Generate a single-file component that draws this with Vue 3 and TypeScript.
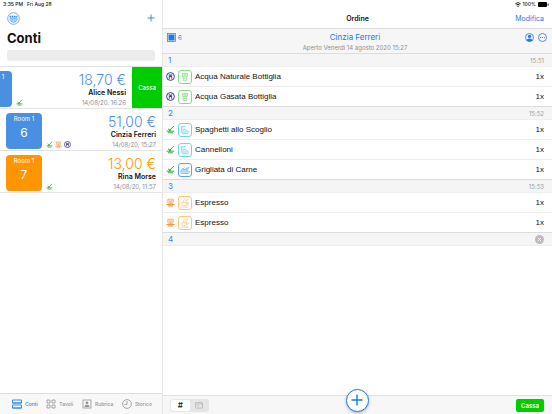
<script setup lang="ts">
import { ref } from 'vue'

type Mark = 'dish' | 'cup' | 'bottle'
type Picture = 'glass' | 'pasta' | 'grill' | 'coffee'

interface Account {
  room: string
  table: string
  total: string
  name: string
  date: string
  tone: 'blue' | 'orange'
  marks: Mark[]
  swiped: boolean
}

interface Course {
  number: number
  time: string
  items: { name: string; mark: Mark; picture: Picture; quantity: number }[]
}

const accounts: Account[] = [
  { room: 'Room 1', table: '', total: '18,70 €', name: 'Alice Nessi', date: '14/08/20, 16:26', tone: 'blue', marks: ['dish'], swiped: true },
  { room: 'Room 1', table: '6', total: '51,00 €', name: 'Cinzia Ferreri', date: '14/08/20, 15:27', tone: 'blue', marks: ['dish', 'cup', 'bottle'], swiped: false },
  { room: 'Room 1', table: '7', total: '13,00 €', name: 'Rina Morse', date: '14/08/20, 11:57', tone: 'orange', marks: ['dish'], swiped: false },
]

const courses: Course[] = [
  {
    number: 1,
    time: '15:51',
    items: [
      { name: 'Acqua Naturale Bottiglia', mark: 'bottle', picture: 'glass', quantity: 1 },
      { name: 'Acqua Gasata Bottiglia', mark: 'bottle', picture: 'glass', quantity: 1 },
    ],
  },
  {
    number: 2,
    time: '15:52',
    items: [
      { name: 'Spaghetti allo Scoglio', mark: 'dish', picture: 'pasta', quantity: 1 },
      { name: 'Cannelloni', mark: 'dish', picture: 'pasta', quantity: 1 },
      { name: 'Grigliata di Carne', mark: 'dish', picture: 'grill', quantity: 1 },
    ],
  },
  {
    number: 3,
    time: '15:53',
    items: [
      { name: 'Espresso', mark: 'cup', picture: 'coffee', quantity: 1 },
      { name: 'Espresso', mark: 'cup', picture: 'coffee', quantity: 1 },
    ],
  },
  { number: 4, time: '', items: [] },
]

const tabs = ['Conti', 'Tavoli', 'Rubrica', 'Storico']
const activeTab = ref('Conti')
const search = ref('')
</script>

<template>
  <svg class="defs" aria-hidden="true">
    <symbol id="dish" viewBox="0 0 9 9">
      <path d="M2 3.8 3.8 5.2 7.8 1" fill="none" stroke="currentColor" stroke-width=".9" />
      <path d="M.6 6.2H8.2M2 7.8H7" fill="none" stroke="currentColor" stroke-width=".9" />
      <path d="M3.2 4.4 5 5.2 4 6.2H3z" fill="currentColor" />
    </symbol>
    <symbol id="cup" viewBox="0 0 9 9">
      <path d="M1.8 1.2H7.2V4.4Q7 5.4 6 5.4H3Q2 5.4 1.8 4.4z" fill="currentColor" fill-opacity=".2" stroke="currentColor" stroke-width=".6" />
      <path d="M3 2.5 4.4 3.6 6 2.5M3.6 4.4H5.6" fill="none" stroke="currentColor" stroke-width=".6" />
      <path d="M.4 6.6H8.6M2 7.9H7" stroke="currentColor" stroke-width="1" />
    </symbol>
    <symbol id="bottle" viewBox="0 0 9 9">
      <circle cx="4.5" cy="4.5" r="3.9" fill="none" stroke="currentColor" stroke-width=".9" />
      <path d="M3.3 2.2V6.9M5.7 2.2V6.9M3.3 4.5H5.7M4.5 2.6V4.5" fill="none" stroke="currentColor" stroke-width=".8" />
    </symbol>
    <symbol id="glass" viewBox="0 0 14 14">
      <path d="M3.8 3H10.2L9.8 6.2H4.2z" fill="currentColor" fill-opacity=".25" />
      <path d="M3.8 3H10.2L9.8 6.2H4.2zM4.7 6.2 5 11H9L9.3 6.2M5 8.6H9M5.6 4.6H8.4" fill="none" stroke="currentColor" stroke-width=".9" />
    </symbol>
    <symbol id="pasta" viewBox="0 0 14 14">
      <path d="M2.8 2.8H7.3V6.6L11 8.2V9H4L2.8 8z" fill="currentColor" fill-opacity=".25" />
      <path d="M3 2.4V8.8M3 2.8H7.4M4.6 7.6C5 6.2 6.6 6 7.4 6.8S10 7.2 10.4 8.6M2 9.4H12M3.4 11.2H10.6" fill="none" stroke="currentColor" stroke-width=".9" />
    </symbol>
    <symbol id="grill" viewBox="0 0 14 14">
      <path d="M2.4 8C3 5.6 5 5.6 6.2 6.4S9.6 6.2 11.4 3.6L12 5.4 10.8 8.4z" fill="currentColor" fill-opacity=".3" />
      <path d="M2 8.4C3 5.4 5 5.6 6.2 6.4S9.8 6 11.8 3.4M4.6 5.6 6 4.2M8 6 9.4 4M1 9.2H13M2.6 11H11.4M5 7.2 6.2 8M8.4 7.2 10 8" fill="none" stroke="currentColor" stroke-width=".9" />
    </symbol>
    <symbol id="coffee" viewBox="0 0 14 14">
      <path d="M3.6 6.2H9.2L9 9Q8.4 10.2 7.4 10.2H5.4Q4 10.2 3.8 9zM9.2 6.8Q11.4 6.4 11 8 10.4 9 8.8 9M2.4 11.8H10.8M5 5.2Q4.6 4 6.2 3.6T8 1.8M7.4 5.2Q7.8 4 9.2 3.8T10.6 2.4" fill="none" stroke="currentColor" stroke-width=".9" />
    </symbol>
  </svg>

  <div class="app">
    <aside class="sidebar">
      <header class="side-head">
        <div class="status"><span>3:35 PM</span><span>Fri Aug 28</span></div>
        <div class="side-tools">
          <button class="icon-button" aria-label="Menu">
            <svg width="13" height="13" viewBox="0 0 13 13" fill="none" stroke="currentColor">
              <circle cx="6.5" cy="6.5" r="5.8" stroke-width=".7" />
              <path d="M3 6.2H10V8Q9.4 10.2 6.5 10.4 3.6 10.2 3 8z" fill="currentColor" fill-opacity=".3" stroke-width=".5" />
              <path d="M2.6 4.6H10.4" stroke-width="1.6" stroke-dasharray="1.6 .6" />
              <path d="M5.2 6.2V10M7.8 6.2V10" stroke-width=".4" />
            </svg>
          </button>
          <button class="icon-button" aria-label="Nuovo conto">
            <svg width="8" height="8" viewBox="0 0 8 8" stroke="currentColor"><path d="M4 .5V7.5M.5 4H7.5" /></svg>
          </button>
        </div>
        <h1>Conti</h1>
        <input v-model="search" class="search" type="search" aria-label="Cerca" />
      </header>

      <ul class="accounts">
        <li v-for="account in accounts" :key="account.name" :class="['account', account.tone, { swiped: account.swiped }]">
          <div class="account-body">
            <div class="tile"><span class="room">{{ account.room }}</span><span class="table">{{ account.table }}</span></div>
            <div class="marks">
              <svg v-for="mark in account.marks" :key="mark" :class="mark" width="7" height="7"><use :href="'#' + mark" /></svg>
            </div>
            <div class="details">
              <span class="total">{{ account.total }}</span>
              <strong>{{ account.name }}</strong>
              <time>{{ account.date }}</time>
            </div>
          </div>
          <button v-if="account.swiped" class="swipe">Cassa</button>
        </li>
      </ul>

      <nav class="tabs">
        <button v-for="tab in tabs" :key="tab" :class="{ active: tab === activeTab }" @click="activeTab = tab">
          <svg width="10" height="10" viewBox="0 0 10 10" fill="none" stroke="currentColor" stroke-width=".8">
            <path v-if="tab === 'Conti'" d="M.5 1H9.5V4H.5zM.5 6H9.5V9H.5zM.5 4H9.5M.5 9H9.5" stroke-width="1" />
            <path v-else-if="tab === 'Tavoli'" d="M1 1H4V4H1zM6 1H9V4H6zM1 6H4V9H1zM6 6H9V9H6z" />
            <template v-else-if="tab === 'Rubrica'">
              <rect x="1" y="1" width="8" height="8" />
              <circle cx="5" cy="3.8" r="1.4" fill="currentColor" stroke="none" />
              <path d="M2.4 8Q2.6 5.8 5 5.8T7.6 8z" fill="currentColor" stroke="none" />
            </template>
            <template v-else>
              <circle cx="5" cy="5" r="4.4" />
              <path d="M5 2V5.4H2.6" />
            </template>
          </svg>
          <span>{{ tab }}</span>
        </button>
      </nav>
    </aside>

    <main class="order">
      <header class="order-head">
        <div class="status right">
          <svg width="6" height="5" viewBox="0 0 6 5" fill="none" stroke="currentColor"><path d="M.3 1.8Q3-.6 5.7 1.8M1.3 3Q3 1.6 4.7 3" stroke-width=".9" /><circle cx="3" cy="4.2" r=".7" fill="currentColor" stroke="none" /></svg>
          <span>100%</span>
          <svg width="11" height="5" viewBox="0 0 11 5"><rect width="9" height="5" x="0" rx="1" /><rect x="9.6" y="1.6" width="1" height="1.8" rx=".5" /></svg>
        </div>
        <div class="order-title">
          <h2>Ordine</h2>
          <button class="edit">Modifica</button>
        </div>
      </header>

      <section class="customer">
        <div class="seats">
          <svg width="9" height="9" viewBox="0 0 9 9"><rect x=".5" y=".5" width="8" height="8" fill="none" stroke="currentColor" stroke-width=".7" /><rect x="2" y="2" width="5" height="5" fill="currentColor" stroke="currentColor" /></svg>
          <span>6</span>
        </div>
        <div class="who">
          <h3>Cinzia Ferreri</h3>
          <p>Aperto Venerdì 14 agosto 2020 15:27</p>
        </div>
        <div class="customer-tools">
          <button class="icon-button" aria-label="Cliente">
            <svg width="9" height="9" viewBox="0 0 9 9"><circle cx="4.5" cy="4.5" r="4" fill="none" stroke="currentColor" stroke-width=".8" /><circle cx="4.5" cy="3.4" r="1.6" fill="currentColor" /><path d="M1.6 7.2Q2.2 5.4 4.5 5.4T7.4 7.2Q6.4 8.4 4.5 8.4T1.6 7.2" fill="currentColor" /></svg>
          </button>
          <button class="icon-button" aria-label="Altro">
            <svg width="9" height="9" viewBox="0 0 9 9"><circle cx="4.5" cy="4.5" r="4" fill="none" stroke="currentColor" stroke-width=".8" /><circle cx="2.6" cy="4.5" r=".6" fill="currentColor" /><circle cx="4.5" cy="4.5" r=".6" fill="currentColor" /><circle cx="6.4" cy="4.5" r=".6" fill="currentColor" /></svg>
          </button>
        </div>
      </section>

      <div class="courses">
        <section v-for="course in courses" :key="course.number">
          <header class="course-head">
            <h4>{{ course.number }}</h4>
            <time v-if="course.time">{{ course.time }}</time>
            <button v-else class="remove" aria-label="Elimina portata">
              <svg width="9" height="9" viewBox="0 0 9 9"><circle cx="4.5" cy="4.5" r="4.5" fill="#bcbcbc" /><path d="M3 3 6 6M6 3 3 6" stroke="#f4f4f4" stroke-width=".9" /></svg>
            </button>
          </header>
          <ul class="items">
            <li v-for="(item, index) in course.items" :key="index">
              <svg :class="item.mark" width="9" height="9"><use :href="'#' + item.mark" /></svg>
              <span :class="['picture', item.picture]"><svg width="12" height="12"><use :href="'#' + item.picture" /></svg></span>
              <span class="item-name">{{ item.name }}</span>
              <span class="quantity">{{ item.quantity }}x</span>
            </li>
          </ul>
        </section>
      </div>

      <footer class="order-foot">
        <div class="segments">
          <button class="on" aria-label="Numeri">#</button>
          <button aria-label="Scheda">
            <svg width="8" height="7" viewBox="0 0 8 7" fill="none" stroke="#b4b4b6" stroke-width=".8"><rect x=".5" y=".5" width="7" height="5.6" rx=".8" /><path d="M.5 2H7.5M2 4H4" /></svg>
          </button>
        </div>
        <button class="add" aria-label="Aggiungi">
          <svg width="12" height="12" viewBox="0 0 12 12" stroke="currentColor"><path d="M6 .5V11.5M.5 6H11.5" stroke-width="1.4" /></svg>
        </button>
        <button class="pay">Cassa</button>
      </footer>
    </main>
  </div>
</template>

<style>
body {
  background: #fff;
}
</style>

<style scoped>
* {
  box-sizing: border-box;
}
h1, h2, h3, h4, p, ul {
  margin: 0;
  padding: 0;
  font-weight: 400;
  list-style: none;
}
button {
  margin: 0;
  padding: 0;
  border: 0;
  background: none;
  color: inherit;
  font: inherit;
  cursor: pointer;
}
svg {
  display: block;
  flex: none;
}
.defs {
  position: absolute;
  width: 0;
  height: 0;
}
.app {
  display: grid;
  grid-template-columns: 162px 1fr;
  min-height: 100vh;
  font-family: Inter, "Liberation Sans", sans-serif;
  font-size: 7px;
  color: #111;
}
.sidebar, .order {
  display: flex;
  flex-direction: column;
  min-width: 0;
}
.order {
  border-left: 1px solid #e6e6e6;
}
.status {
  display: flex;
  align-items: center;
  gap: 4px;
  height: 8px;
  font-size: 5px;
  font-weight: 500;
}
.status.right {
  justify-content: flex-end;
  gap: 2px;
  padding-right: 3px;
}
.side-head {
  padding: 0 7px 5px;
  border-bottom: 1px solid #e2e2e2;
}
.side-head .status {
  margin-left: -4px;
}
.side-tools {
  display: flex;
  justify-content: space-between;
  align-items: center;
  height: 20px;
  color: #2f8cf0;
}
h1 {
  font-size: 13px;
  line-height: 20px;
  font-weight: 700;
}
.search {
  display: block;
  width: 100%;
  height: 11px;
  margin-top: 2px;
  padding: 0 4px;
  border: 0;
  border-radius: 3px;
  background: #ececec;
  font: inherit;
  appearance: none;
}
.accounts {
  flex: 1;
}
.account {
  display: flex;
  height: 42px;
  overflow: hidden;
  border-bottom: 1px solid #e4e4e4;
}
.account-body {
  display: flex;
  flex: none;
  width: 100%;
  padding: 4px 6px 1px;
}
.swiped .account-body {
  margin-left: -30px;
}
.blue {
  --tone: #4a90e2;
}
.orange {
  --tone: #ff9500;
}
.tile {
  display: flex;
  flex-direction: column;
  align-items: center;
  width: 36px;
  height: 36px;
  padding-top: 2px;
  border-radius: 4px;
  background: var(--tone);
  color: #fff;
}
.room {
  font-size: 6px;
  line-height: 8px;
}
.table {
  font-size: 12px;
  line-height: 20px;
}
.marks {
  display: flex;
  align-items: flex-end;
  gap: 2px;
  margin-left: 4px;
  padding-bottom: 1px;
}
.details {
  display: flex;
  flex-direction: column;
  align-items: flex-end;
  flex: 1;
}
.total {
  color: var(--tone);
  font-size: 14px;
  line-height: 17px;
  font-weight: 300;
  white-space: nowrap;
}
.details strong {
  font-size: 7px;
  line-height: 10px;
  font-weight: 600;
}
.details time {
  font-size: 6px;
  line-height: 10px;
  color: #8e8e93;
}
.swipe {
  flex: none;
  width: 30px;
  background: #0c0;
  color: #fff;
  font-size: 6px;
  font-weight: 500;
}
.dish {
  color: #16a822;
}
.cup {
  color: #f58a2c;
}
.bottle {
  color: #25218f;
}
.tabs {
  display: flex;
  justify-content: space-between;
  height: 21px;
  padding: 0 10px 0 12px;
  border-top: 1px solid #ddd;
  background: #f8f8f8;
  color: #929292;
  font-size: 5px;
  font-weight: 500;
}
.tabs button {
  display: flex;
  align-items: center;
  gap: 3px;
}
.tabs .active {
  color: #2f8cf0;
}
.order-head {
  height: 28px;
}
.order-title {
  display: grid;
  grid-template-columns: 1fr auto 1fr;
  align-items: center;
  height: 20px;
  padding: 0 8px;
}
.order-title h2 {
  grid-column: 2;
  font-size: 7px;
  font-weight: 600;
}
.edit {
  justify-self: end;
  color: #2878f0;
  font-size: 7px;
}
.customer {
  display: grid;
  grid-template-columns: 1fr auto 1fr;
  height: 26px;
  padding: 4px 5px 0 4px;
  border-top: 1px solid #ddd;
  border-bottom: 1px solid #ddd;
  background: #f6f6f6;
  color: #1a78f0;
}
.seats {
  display: flex;
  gap: 2px;
  font-size: 6px;
  line-height: 9px;
}
.who {
  padding-right: 4px;
  text-align: center;
}
.who h3 {
  font-size: 8px;
  line-height: 9px;
}
.who p {
  margin-top: 2px;
  font-size: 6px;
  line-height: 8px;
  color: #8e8e93;
}
.customer-tools {
  display: flex;
  justify-content: flex-end;
  align-items: flex-start;
  gap: 4px;
}
.courses {
  flex: 1;
}
.course-head {
  display: flex;
  justify-content: space-between;
  align-items: center;
  height: 13px;
  padding: 0 8px 0 5px;
  background: #f5f5f5;
  border-bottom: 1px solid #eee;
}
.course-head h4 {
  color: #3a86ee;
  font-size: 8px;
}
.course-head time {
  color: #a0a0a4;
  font-size: 6px;
}
.items li {
  display: flex;
  align-items: center;
  height: 20px;
  padding: 0 8px 0 3px;
  border-bottom: 1px solid #ececec;
  font-family: "Liberation Sans", Arial, sans-serif;
  font-size: 8px;
}
.items li:last-child {
  border-bottom-color: #dcdcdc;
}
.picture {
  display: grid;
  place-items: center;
  width: 14px;
  height: 14px;
  margin: 0 3px;
  border: 1px solid currentColor;
  border-radius: 3px;
}
.glass {
  color: #86dd86;
}
.pasta {
  color: #6fd6f2;
}
.grill {
  color: #5aa6ee;
}
.coffee {
  color: #ffc57c;
}
.item-name {
  flex: 1;
}
.order-foot {
  display: grid;
  grid-template-columns: 1fr auto 1fr;
  align-items: center;
  height: 19px;
  padding: 0 8px 0 7px;
  border-top: 1px solid #e0e0e0;
  background: #f7f7f7;
}
.segments {
  display: flex;
  justify-self: start;
  width: 39px;
  height: 13px;
  padding: 1px;
  border-radius: 3px;
  background: #e6e6e7;
}
.segments button {
  display: grid;
  flex: 1;
  place-items: center;
  border-radius: 2px;
  font-size: 8px;
  line-height: 8px;
  font-weight: 500;
}
.segments .on {
  background: #fff;
}
.add {
  display: grid;
  place-items: center;
  width: 23px;
  height: 23px;
  margin-top: -10px;
  border: 1px solid #2878d8;
  border-radius: 50%;
  background: #fff;
  color: #1a78e8;
  box-shadow: 0 1px 3px #0004;
}
.pay {
  justify-self: end;
  width: 28px;
  height: 13px;
  border-radius: 2px;
  background: #0c0;
  color: #fff;
  font-size: 6px;
  font-weight: 600;
}
</style>
